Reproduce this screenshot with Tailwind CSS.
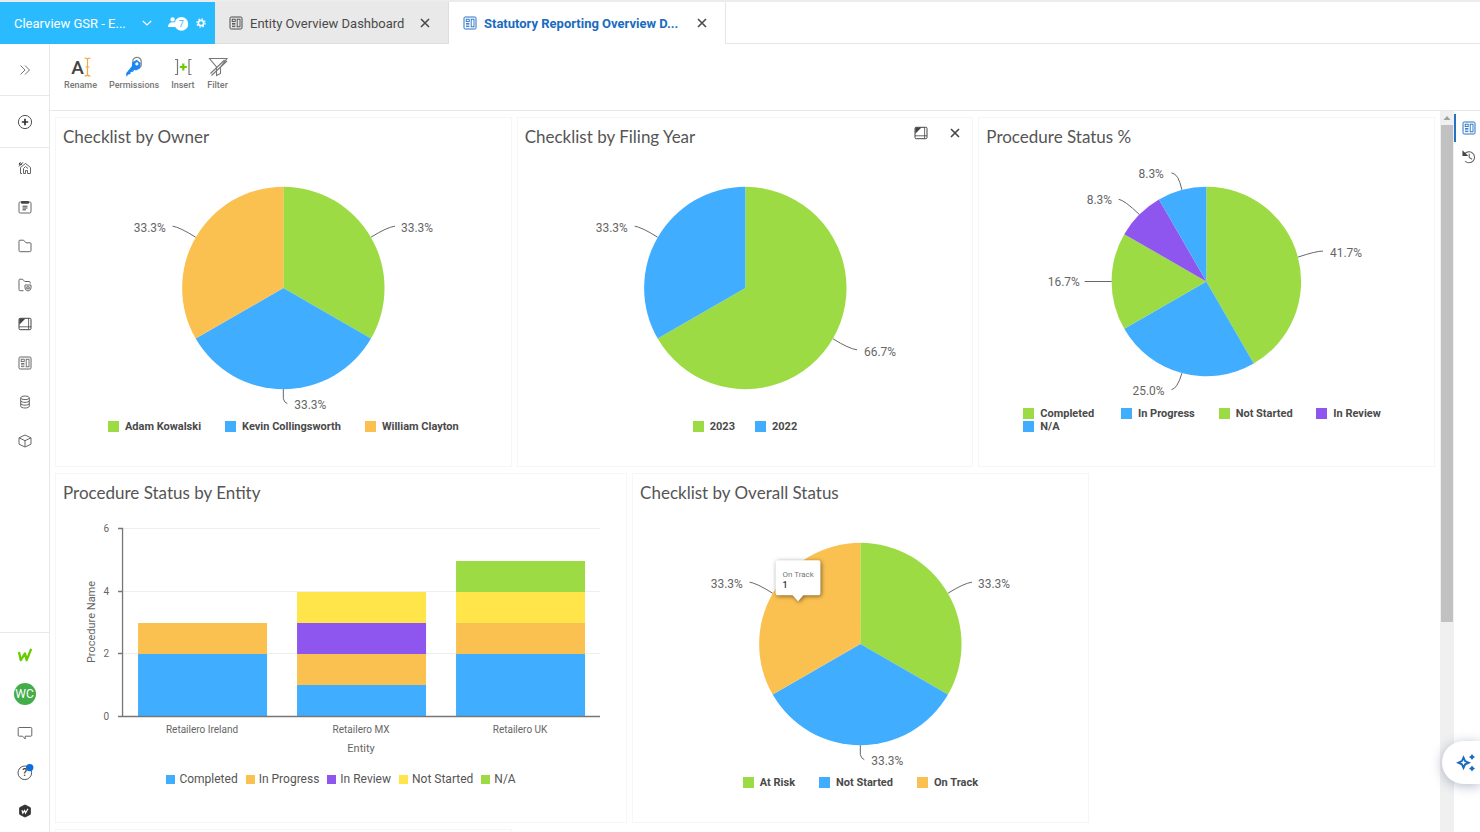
<!DOCTYPE html>
<html lang="en">
<head>
    <meta charset="UTF-8">
    <meta name="viewport" content="width=device-width, initial-scale=1.0">
    <title>Statutory Reporting Overview Dashboard</title>
    <script src="https://cdn.jsdelivr.net/npm/@tailwindcss/browser@4"></script>
</head>
<body class="h-screen overflow-hidden flex flex-col bg-white text-[#4a4a4a] font-['Roboto',sans-serif]">

    <!-- Shared icons -->
    <svg class="hidden" aria-hidden="true">
        <symbol id="i-dashboard" viewBox="0 0 14 14">
            <g fill="none" stroke="currentColor">
                <rect x="1" y="1" width="12" height="12" rx="1.2" />
                <rect x="8.2" y="3.2" width="2.8" height="7.6" stroke-width=".9" />
                <rect x="3.2" y="3.2" width="3" height="2.4" stroke-width=".9" />
                <path d="M3 7.5h3.4M3 8.9h3.4M3 10.6h3.4" stroke-width=".9" />
            </g>
        </symbol>
        <symbol id="i-sheet" viewBox="0 0 14 14">
            <rect x="1" y="1.3" width="12" height="11.4" rx="1.2" fill="none" stroke="currentColor" />
            <path d="M1 9.8h12M10.6 1.3v11.4" fill="none" stroke="currentColor" stroke-width=".8" />
            <path d="M1.3 1.6h6.2L1.3 7.8z" fill="currentColor" />
        </symbol>
        <symbol id="i-close" viewBox="0 0 10 10">
            <path d="M1 1l8 8M9 1L1 9" fill="none" stroke="currentColor" stroke-width="1.6" />
        </symbol>
    </svg>

    <!-- Tabs -->
    <header class="flex shrink-0 h-11 border-t-2 border-[#ececec] text-[13px] leading-none">
        <div class="flex items-center w-[215px] pl-3.5 bg-[#2abbff] text-white">
            <button class="flex items-center justify-between w-[138px] h-full">
                <span>Clearview GSR - E...</span>
                <svg class="w-2.5 h-2.5" viewBox="0 0 10 10"><path d="M.8 3L5 7l4.2-4" fill="none" stroke="currentColor" stroke-width="1.2" /></svg>
            </button>
            <button class="flex items-center ml-4" aria-label="7 collaborators">
                <svg class="w-[22px] h-4" viewBox="0 0 22 16">
                    <g fill="#fff">
                        <circle cx="4.6" cy="4.4" r="2.200" />
                        <path d="M0 12c0-3.200 1.800-4.800 4.600-4.800h3V12z" />
                        <circle cx="13.400" cy="8.900" r="6.800" />
                    </g>
                    <text x="13.400" y="12.300" text-anchor="middle" font-size="9" fill="#2abbff">7</text>
                </svg>
            </button>
            <button class="ml-1.5" aria-label="Settings">
                <svg class="w-2.5 h-2.5" viewBox="0 0 10 10"><g fill="none" stroke="#fff"><circle cx="5" cy="5" r="2.700" stroke-width="1.700" /><circle cx="5" cy="5" r="4.100" stroke-width="1.200" stroke-dasharray="1.600 1.620" /></g></svg>
            </button>
        </div>
        <div class="flex items-center w-[234px] px-3.5 bg-[#e9e9e9] border-r border-[#dedede] shadow-[inset_0_-1px_#dedede]">
            <svg class="w-3.5 h-3.5 mr-[7px]"><use href="#i-dashboard" /></svg>
            <a href="#" class="flex-1">Entity Overview Dashboard</a>
            <button class="p-1" aria-label="Close tab"><svg class="w-2.5 h-2.5"><use href="#i-close" /></svg></button>
        </div>
        <div class="flex items-center w-[277px] px-3.5 border-r border-[#e6e6e6]">
            <svg class="w-3.5 h-3.5 mr-[7px] text-[#2372c4]"><use href="#i-dashboard" /></svg>
            <a href="#" class="flex-1 font-bold text-[#1a6bbf]">Statutory Reporting Overview D...</a>
            <button class="p-1" aria-label="Close tab"><svg class="w-2.5 h-2.5"><use href="#i-close" /></svg></button>
        </div>
        <div class="flex-1 border-b border-[#e6e6e6]"></div>
    </header>

    <div class="flex flex-1 min-h-0">

        <!-- Left navigation -->
        <nav class="flex flex-col shrink-0 w-[50px] pb-0.5 border-r border-[#e8e8e8] text-[#666]">
            <button class="flex items-center justify-center h-[52px] border-b border-[#e8e8e8]" aria-label="Expand">
                <svg class="w-3 h-3" viewBox="0 0 12 12"><path d="M1.500 1.500L6 6l-4.500 4.500M6 1.500L10.500 6 6 10.500" fill="none" stroke="#777" /></svg>
            </button>
            <button class="flex items-center justify-center h-[52px] border-b border-[#e8e8e8]" aria-label="Create">
                <svg class="w-4 h-4" viewBox="0 0 16 16"><circle cx="8" cy="8" r="6.600" fill="none" stroke="#555" /><path d="M8 4.800v6.400M4.800 8h6.400" stroke="#333" stroke-width="1.700" /></svg>
            </button>
            <button class="flex items-center justify-center h-[39px]" aria-label="Home">
                <svg class="w-3.5 h-3.5" viewBox="0 0 14 14" fill="none" stroke="currentColor" stroke-width="1"><path d="M4 12.500H2.500V6.500L7.500 2.500l5 4v6h-3V9.500h-2v3H5.500V7.500l2-2 2.500 2" /><path d="M1 3.200h3M1 3.200l1.500-2M1 5.400l4-4" stroke="#333" /></svg>
            </button>
            <button class="flex items-center justify-center h-[39px]" aria-label="Tasks">
                <svg class="w-3.5 h-3.5" viewBox="0 0 14 14" fill="none" stroke="currentColor"><rect x="1" y="2" width="12" height="11" rx="1.200" /><path d="M3.500 1.600h7v1.600h-7z" fill="#444" stroke="#444" /><path d="M4.500 6.200h5M4.500 8h5M4.500 9.800h3.500" stroke="#444" /></svg>
            </button>
            <button class="flex items-center justify-center h-[39px]" aria-label="Files">
                <svg class="w-3.5 h-3.5" viewBox="0 0 14 14" fill="none" stroke="currentColor"><path d="M2 1.200h3.600l2.400 2.600h4q1 0 1 1v6.700q0 1.200-1.200 1.200H2.200Q1 12.700 1 11.500V2.200q0-1 1-1z" /></svg>
            </button>
            <button class="flex items-center justify-center h-[39px]" aria-label="Shared files">
                <svg class="w-3.5 h-3.5" viewBox="0 0 14 14" fill="none" stroke="currentColor"><path d="M5.500 12.700H2.200Q1 12.700 1 11.500V2.200q0-1 1-1h2.600l2.200 2.300h4.400q1 0 1 1v1" /><path d="M7 7h6v3q0 2.200-3 3-3-.8-3-3z" /><path d="M8.800 8.800h2.400v2H8.800z" /></svg>
            </button>
            <button class="flex items-center justify-center h-[39px]" aria-label="Sheets">
                <svg class="w-3.5 h-3.5 text-[#444]"><use href="#i-sheet" /></svg>
            </button>
            <button class="flex items-center justify-center h-[39px]" aria-label="Dashboards">
                <svg class="w-3.5 h-3.5"><use href="#i-dashboard" /></svg>
            </button>
            <button class="flex items-center justify-center h-[39px]" aria-label="Data">
                <svg class="w-3.5 h-3.5" viewBox="0 0 14 14" fill="none" stroke="currentColor"><ellipse cx="7" cy="2.800" rx="4.300" ry="1.800" /><path d="M2.700 2.800v8.400c0 1 2 1.800 4.300 1.800s4.300-.8 4.300-1.800V2.800M2.700 5.600c0 1 2 1.800 4.300 1.800s4.300-.8 4.300-1.800M2.700 8.400c0 1 2 1.800 4.300 1.800s4.300-.8 4.300-1.800" /></svg>
            </button>
            <button class="flex items-center justify-center h-[39px]" aria-label="Models">
                <svg class="w-3.5 h-3.5" viewBox="0 0 14 14" fill="none" stroke="currentColor" stroke-linejoin="round"><path d="M7 1l6 2.800v6.400L7 13l-6-2.800V3.800zM1 3.800l6 2.900 6-2.900M7 6.700V13" /></svg>
            </button>

            <div class="flex flex-col mt-auto pt-0.5 border-t border-[#e8e8e8]">
                <button class="flex items-center justify-center h-[39px]" aria-label="Workiva">
                    <svg class="w-4 h-4" viewBox="0 0 16 16"><path d="M2 5l1.800 8.200 4.200-6.800 1.700 6.800L14.200 1.800" fill="none" stroke="#6c0" stroke-width="2.300" stroke-linejoin="round" /></svg>
                </button>
                <button class="flex items-center justify-center h-[39px]">
                    <span class="flex items-center justify-center w-[22px] h-[22px] rounded-full bg-[#43ad49] text-white text-xs leading-none">WC</span>
                </button>
                <button class="flex items-center justify-center h-[39px]" aria-label="Comments">
                    <svg class="w-4 h-4" viewBox="0 0 16 16"><path d="M2.200 2.500h11.600q1 0 1 1v6.700q0 1-1 1H8.200V14l-2.600-2.800H2.200q-1 0-1-1V3.500q0-1 1-1z" fill="none" stroke="currentColor" stroke-linejoin="round" /></svg>
                </button>
                <button class="flex items-center justify-center h-[39px]" aria-label="Help">
                    <svg class="w-[18px] h-[18px]" viewBox="0 0 18 18"><circle cx="8.800" cy="9.800" r="6.800" fill="none" stroke="#555" /><text x="8.800" y="13.400" text-anchor="middle" font-size="10" font-weight="500" fill="#333">?</text><circle cx="13.700" cy="4.600" r="3.700" fill="#0a6fdc" /></svg>
                </button>
                <button class="flex items-center justify-center h-[39px]" aria-label="Admin">
                    <svg class="w-3.5 h-3.5" viewBox="0 0 14 14"><path d="M7 1l5.300 2.700v6.600L7 13l-5.300-2.700V3.700z" fill="#333" stroke="#333" stroke-linejoin="round" /><path d="M4 6.200l.8 3 1.800-2.600.9 2.400L10 4.800" fill="none" stroke="#fff" stroke-width="1.200" /></svg>
                </button>
            </div>
        </nav>

        <div class="flex flex-col flex-1 min-w-0">

            <!-- Toolbar -->
            <div class="flex shrink-0 items-start gap-3 h-[67px] pt-3 pl-3.5 border-b border-[#e8e8e8] text-[9px] leading-3 font-medium text-[#777]">
                <button class="flex flex-col items-center gap-px">
                    <svg class="w-[22px] h-[22px]" viewBox="0 0 22 22"><text x="7.500" y="17.500" text-anchor="middle" font-size="19" font-weight="500" fill="#444">A</text><path d="M14.500 2q2 0 3 1 1-1 3-1M14.500 20q2 0 3-1 1 1 3 1M17.500 3v16M15.500 11h4" fill="none" stroke="#f5a742" stroke-width="1.200" /></svg>
                    Rename
                </button>
                <button class="flex flex-col items-center gap-px">
                    <svg class="w-[22px] h-[22px]" viewBox="0 0 22 22"><path d="M9.800 7V5.500a4.200 4.200 0 0 1 8.400 0V9q0 1.500-1.400 2.500" fill="none" stroke="#888" stroke-width="1.300" /><path fill-rule="evenodd" d="M9.200 6.500l4.500-2.700 4 3.200-.8 5.500-4 1.900-1.500-.6-1.400 2-2.200.2-.6 2.200-2.200.2-1 2H3.500l-.4-3.200 5.700-7zM13.800 6.300a1.600 1.600 0 1 0 .1 0z" fill="#1b87f5" /></svg>
                    Permissions
                </button>
                <button class="flex flex-col items-center gap-px">
                    <svg class="w-[22px] h-[22px]" viewBox="0 0 22 22"><path d="M3 3.500h2.500v15H3M19.500 3.500H17v15h2.500" fill="none" stroke="#777" stroke-width="1.200" /><path d="M11.300 7.500v7M7.800 11h7" stroke="#6c0" stroke-width="2.200" /></svg>
                    Insert
                </button>
                <button class="flex flex-col items-center gap-px">
                    <svg class="w-[22px] h-[22px]" viewBox="0 0 22 22"><path d="M2.500 2.500h17.500L13.500 11v6.500l-4 2V11z M20 5L4.500 19.500M17.500 4L3.500 17.500" fill="none" stroke="#777" stroke-width="1.100" /></svg>
                    Filter
                </button>
            </div>

            <div class="flex flex-1 min-h-0">

                <!-- Dashboard widgets -->
                <main class="flex-1 min-w-0 overflow-hidden">
                    <div class="grid grid-cols-12 auto-rows-[350px] gap-x-[5px] gap-y-1.5 px-[5px] pt-1.5">

                        <section class="col-span-4 border border-[#f6f6f6] text-[11px]">
                            <h2 class="h-[39px] px-[7px] pt-[7px] font-['Lato',sans-serif] text-[17px] leading-6 text-[#555]">Checklist by Owner</h2>
                            <svg class="w-full h-[262px]" viewBox="0 0 456 262">
                                <path d="M228 131V29.500A101.500 101.500 0 0 1 315.900 181.750z" fill="#9cdb43" />
                                <path d="M228 131L315.900 181.750A101.500 101.500 0 0 1 140.100 181.750z" fill="#40adff" />
                                <path d="M228 131L140.100 181.750A101.500 101.500 0 0 1 228 29.500z" fill="#fac151" />
                                <path d="M316 80Q332 70 340 69M140 80Q124 70 117 69M228 232.500V242Q229 246 232 247" fill="none" stroke="#666" />
                                <g font-size="12" fill="#666"><text x="346" y="75">33.3%</text><text x="78" y="75">33.3%</text><text x="239" y="252">33.3%</text></g>
                            </svg>
                            <ul class="flex justify-center gap-6 mt-px font-bold leading-[13px]">
                                <li class="flex items-center gap-1.5"><i class="w-[11px] h-[11px] bg-[#9cdb43]"></i>Adam Kowalski</li>
                                <li class="flex items-center gap-1.5"><i class="w-[11px] h-[11px] bg-[#40adff]"></i>Kevin Collingsworth</li>
                                <li class="flex items-center gap-1.5"><i class="w-[11px] h-[11px] bg-[#fac151]"></i>William Clayton</li>
                            </ul>
                        </section>

                        <section class="relative col-span-4 border border-[#f6f6f6] text-[11px]">
                            <h2 class="h-[39px] px-[7px] pt-[7px] font-['Lato',sans-serif] text-[17px] leading-6 text-[#555]">Checklist by Filing Year</h2>
                            <div class="absolute top-2 right-2.5 flex gap-5 text-[#444]">
                                <button aria-label="Open source"><svg class="w-3.5 h-3.5"><use href="#i-sheet" /></svg></button>
                                <button aria-label="Remove"><svg class="w-2.5 h-2.5 mx-0.5"><use href="#i-close" /></svg></button>
                            </div>
                            <svg class="w-full h-[262px]" viewBox="0 0 456 262">
                                <path d="M228 131V29.500A101.500 101.500 0 1 1 140.100 181.750z" fill="#9cdb43" />
                                <path d="M228 131L140.100 181.750A101.500 101.500 0 0 1 228 29.500z" fill="#40adff" />
                                <path d="M316 182Q332 192 340 193M140 80Q124 70 117 69" fill="none" stroke="#666" />
                                <g font-size="12" fill="#666"><text x="347" y="199">66.7%</text><text x="78" y="75">33.3%</text></g>
                            </svg>
                            <ul class="flex justify-center gap-5 mt-px font-bold leading-[13px]">
                                <li class="flex items-center gap-1.5"><i class="w-[11px] h-[11px] bg-[#9cdb43]"></i>2023</li>
                                <li class="flex items-center gap-1.5"><i class="w-[11px] h-[11px] bg-[#40adff]"></i>2022</li>
                            </ul>
                        </section>

                        <section class="col-span-4 border border-[#f6f6f6] text-[11px]">
                            <h2 class="h-[39px] px-[7px] pt-[7px] font-['Lato',sans-serif] text-[17px] leading-6 text-[#555]">Procedure Status %</h2>
                            <svg class="w-full h-[249px]" viewBox="0 0 456 249">
                                <path d="M228 124.500V29.500A95 95 0 0 1 275.500 206.800z" fill="#9cdb43" />
                                <path d="M228 124.500L275.500 206.800A95 95 0 0 1 145.700 172z" fill="#40adff" />
                                <path d="M228 124.500L145.700 172A95 95 0 0 1 145.700 77z" fill="#9cdb43" />
                                <path d="M228 124.500L145.700 77A95 95 0 0 1 180.500 42.200z" fill="#8e56ee" />
                                <path d="M228 124.500L180.500 42.200A95 95 0 0 1 228 29.500z" fill="#40adff" />
                                <path d="M320 100Q338 94 345 94M203.500 216.500Q199 232 193 233M106 124.500H133M160.800 57.300Q146 43 140 42M203.500 32.500Q200 16 193 15.500" fill="none" stroke="#666" />
                                <g font-size="12" fill="#666">
                                    <text x="352" y="100">41.7%</text><text x="154" y="238">25.0%</text><text x="69" y="129">16.7%</text><text x="108" y="47">8.3%</text><text x="160" y="21">8.3%</text>
                                </g>
                            </svg>
                            <ul class="grid grid-cols-4 mt-px pl-11 pr-5 font-bold leading-[13px]">
                                <li class="flex items-center gap-1.5"><i class="w-[11px] h-[11px] bg-[#9cdb43]"></i>Completed</li>
                                <li class="flex items-center gap-1.5"><i class="w-[11px] h-[11px] bg-[#40adff]"></i>In Progress</li>
                                <li class="flex items-center gap-1.5"><i class="w-[11px] h-[11px] bg-[#9cdb43]"></i>Not Started</li>
                                <li class="flex items-center gap-1.5"><i class="w-[11px] h-[11px] bg-[#8e56ee]"></i>In Review</li>
                                <li class="flex items-center gap-1.5"><i class="w-[11px] h-[11px] bg-[#40adff]"></i>N/A</li>
                            </ul>
                        </section>

                        <section class="col-span-5 border border-[#f6f6f6] text-xs">
                            <h2 class="h-[39px] px-[7px] pt-[7px] font-['Lato',sans-serif] text-[17px] leading-6 text-[#555]">Procedure Status by Entity</h2>
                            <svg class="w-full h-[258px]" viewBox="1 0 570 258">
                                <path d="M67 15.500H545M67 78.500H545M67 140.500H545" stroke="#eee" />
                                <g fill="#40adff"><path d="M83 141h129v62H83z" /><path d="M242 172h129v31H242z" /><path d="M401 141h129v62H401z" /></g>
                                <g fill="#fac151"><path d="M83 110h129v31H83z" /><path d="M242 141h129v31H242z" /><path d="M401 110h129v31H401z" /></g>
                                <path d="M242 110h129v31H242z" fill="#8e56ee" />
                                <g fill="#ffe54a"><path d="M242 79h129v31H242z" /><path d="M401 79h129v31H401z" /></g>
                                <path d="M401 48h129v31H401z" fill="#9cdb43" />
                                <path d="M63 15.500H67.500V203M63 78.500h4M63 140.500h4M63 203.500H545" fill="none" stroke="#777" stroke-width="1.300" />
                                <g font-size="10" fill="#666">
                                    <g text-anchor="end"><text x="54" y="19">6</text><text x="54" y="82">4</text><text x="54" y="144">2</text><text x="54" y="207">0</text></g>
                                    <g text-anchor="middle"><text x="147" y="220">Retailero Ireland</text><text x="306" y="220">Retailero MX</text><text x="465" y="220">Retailero UK</text></g>
                                </g>
                                <g font-size="11" fill="#666" text-anchor="middle"><text x="306" y="239">Entity</text><text transform="translate(40 109) rotate(-90)">Procedure Name</text></g>
                            </svg>
                            <ul class="flex justify-center gap-2 mt-px leading-[15px] text-[#555]">
                                <li class="flex items-center gap-1"><i class="w-[9px] h-[9px] bg-[#40adff]"></i>Completed</li>
                                <li class="flex items-center gap-1"><i class="w-[9px] h-[9px] bg-[#fac151]"></i>In Progress</li>
                                <li class="flex items-center gap-1"><i class="w-[9px] h-[9px] bg-[#8e56ee]"></i>In Review</li>
                                <li class="flex items-center gap-1"><i class="w-[9px] h-[9px] bg-[#ffe54a]"></i>Not Started</li>
                                <li class="flex items-center gap-1"><i class="w-[9px] h-[9px] bg-[#9cdb43]"></i>N/A</li>
                            </ul>
                        </section>

                        <section class="col-span-4 border border-[#f6f6f6] text-[11px]">
                            <h2 class="h-[39px] px-[7px] pt-[7px] font-['Lato',sans-serif] text-[17px] leading-6 text-[#555]">Checklist by Overall Status</h2>
                            <svg class="w-full h-[262px]" viewBox="0 0 456 262">
                                <path d="M228 131V29.500A101.500 101.500 0 0 1 315.900 181.750z" fill="#9cdb43" />
                                <path d="M228 131L315.900 181.750A101.500 101.500 0 0 1 140.100 181.750z" fill="#40adff" />
                                <path d="M228 131L140.100 181.750A101.500 101.500 0 0 1 228 29.500z" fill="#fac151" />
                                <path d="M316 80Q332 70 340 69M140 80Q124 70 117 69M228 232.500V242Q229 246 232 247" fill="none" stroke="#666" />
                                <g font-size="12" fill="#666"><text x="346" y="75">33.3%</text><text x="78" y="75">33.3%</text><text x="239" y="252">33.3%</text></g>
                                <!-- Hover tooltip -->
                                <g class="drop-shadow-[1px_1px_2px_rgba(0,0,0,0.5)]"><path d="M145 47h41q2 0 2 2v31q0 2-2 2h-15l-5.500 6-5.500-6h-15q-2 0-2-2V49q0-2 2-2z" fill="#fff" /></g>
                                <text x="150" y="64" font-size="8" fill="#777">On Track</text>
                                <text x="150" y="75" font-size="9" font-weight="500" fill="#333">1</text>
                            </svg>
                            <ul class="flex justify-center gap-6 mt-px font-bold leading-[13px]">
                                <li class="flex items-center gap-1.5"><i class="w-[11px] h-[11px] bg-[#9cdb43]"></i>At Risk</li>
                                <li class="flex items-center gap-1.5"><i class="w-[11px] h-[11px] bg-[#40adff]"></i>Not Started</li>
                                <li class="flex items-center gap-1.5"><i class="w-[11px] h-[11px] bg-[#fac151]"></i>On Track</li>
                            </ul>
                        </section>

                        <section class="col-span-4 col-start-1 border border-[#f6f6f6]"></section>
                    </div>
                </main>

                <!-- Scrollbar -->
                <div class="flex flex-col items-center shrink-0 w-3.5 bg-[#f0f0f0]">
                    <svg class="w-3.5 h-3.5" viewBox="0 0 14 14"><path d="M7 5l3.500 4h-7z" fill="#a0a0a0" /></svg>
                    <div class="w-3 h-[69%] bg-[#c1c1c1]"></div>
                </div>

                <!-- Side panel -->
                <aside class="flex flex-col shrink-0 w-[26px] pt-[3px] text-[#666]">
                    <button class="flex items-center justify-center h-7 pl-0.5 border-l-2 border-[#2372c4] text-[#2372c4]" aria-label="Dashboard properties">
                        <svg class="w-3.5 h-3.5"><use href="#i-dashboard" /></svg>
                    </button>
                    <button class="flex items-center justify-center h-[30px] pl-1" aria-label="History">
                        <svg class="w-3.5 h-3.5" viewBox="0 0 14 14" fill="none" stroke="currentColor" stroke-width="1.100"><path d="M2.300 4.500A5.500 5.500 0 1 1 3 11M7.200 3.800v3.600l2.800 1.800" /><path d="M1 1.500v4h4z" fill="#444" stroke="#444" /></svg>
                    </button>
                </aside>
            </div>
        </div>
    </div>

    <!-- Assistant -->
    <button class="fixed right-0 bottom-12 flex items-center w-[38px] h-[43px] pl-3.5 rounded-l-full bg-white shadow-[0_2px_12px_rgba(40,60,100,0.35)]" aria-label="Assistant">
        <svg class="w-5 h-5" viewBox="0 0 20 20"><path d="M7.500 4.500l1.600 3.600 3.600 1.600-3.600 1.600-1.600 3.600-1.600-3.600-3.600-1.600 3.600-1.600z" fill="none" stroke="#1a6bbf" stroke-width="1.900" /><path d="M16 1l1.200 1.800 1.800 1.200-1.800 1.200L16 7l-1.200-1.800L13 4l1.800-1.200zM16 12.500l1.200 1.800 1.800 1.200-1.800 1.200L16 18.500l-1.200-1.800-1.800-1.200 1.800-1.200z" fill="#1a6bbf" /></svg>
    </button>
</body>
</html>
